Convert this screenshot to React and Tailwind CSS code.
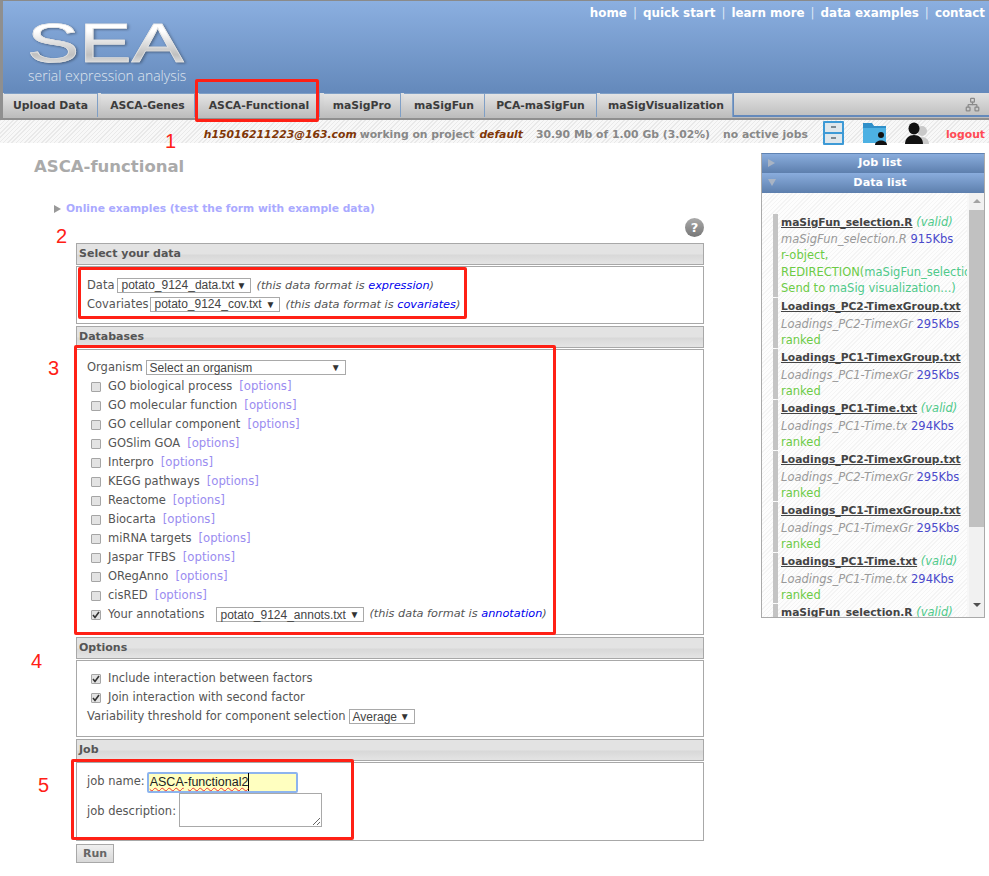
import React from 'react';
import { Network } from 'lucide-react';

const verdana = 'font-["DejaVu_Sans",sans-serif]';
const hatch = 'bg-[repeating-linear-gradient(135deg,#e9e9e9_0,#e9e9e9_1px,#f8f8f8_1px,#f8f8f8_3px)]';
const softHatch = 'bg-[repeating-linear-gradient(135deg,#f4f4f4_0,#f4f4f4_1px,#fdfdfd_1px,#fdfdfd_3px)]';

const tabs = [
  { label: 'Upload Data', className: 'w-[94px]', gap: 'mr-[3px]' },
  { label: 'ASCA-Genes', className: 'w-[94px]', gap: 'mr-[4px]' },
  { label: 'ASCA-Functional', className: 'w-[121px]', gap: 'mr-[4px]' },
  { label: 'maSigPro', className: 'w-[77px]', gap: 'mr-[3px]' },
  { label: 'maSigFun', className: 'w-[81px]', gap: '' },
  { label: 'PCA-maSigFun', className: 'w-[112px]', gap: 'mr-[3px]' },
  { label: 'maSigVisualization', className: 'w-[133px]', gap: '' },
];

const databases = [
  'GO biological process',
  'GO molecular function',
  'GO cellular component',
  'GOSlim GOA',
  'Interpro',
  'KEGG pathways',
  'Reactome',
  'Biocarta',
  'miRNA targets',
  'Jaspar TFBS',
  'ORegAnno',
  'cisRED',
];

const dataFiles = [
  { name: 'Loadings_PC2-TimexGroup.txt', short: 'Loadings_PC2-TimexGr', size: '295Kbs' },
  { name: 'Loadings_PC1-TimexGroup.txt', short: 'Loadings_PC1-TimexGr', size: '295Kbs' },
  { name: 'Loadings_PC1-Time.txt', short: 'Loadings_PC1-Time.tx', size: '294Kbs', valid: true },
  { name: 'Loadings_PC2-TimexGroup.txt', short: 'Loadings_PC2-TimexGr', size: '295Kbs' },
  { name: 'Loadings_PC1-TimexGroup.txt', short: 'Loadings_PC1-TimexGr', size: '295Kbs' },
  { name: 'Loadings_PC1-Time.txt', short: 'Loadings_PC1-Time.tx', size: '294Kbs', valid: true },
];

const Fake = ({ value, className }) => (
  <span className={`inline-flex items-center justify-between h-[15px] border border-[#a9a9a9] bg-white pl-[3px] pr-[4px] font-["Liberation_Sans",sans-serif] text-[12px] text-[#444] shrink-0 ${className}`}>
    <span>{value}</span>
    <span className="text-[10px] text-[#333]">▼</span>
  </span>
);

const Check = ({ checked }) => (
  <span className="w-[10px] h-[10px] rounded-[1px] border border-[#a5a5a5] bg-[#e3e3e3] flex items-center justify-center shrink-0">
    {checked && (
      <svg width="8" height="8" viewBox="0 0 8 8">
        <path d="M1 4 L3 6.5 L7 1" fill="none" stroke="#333" strokeWidth="1.6" />
      </svg>
    )}
  </span>
);

const SectionHead = ({ title }) => (
  <div className={`h-[22px] border border-[#a8a8a8] bg-[linear-gradient(#e3e3e3_50%,#d8d8d8_55%,#e4e4e4)] pl-[2px] flex items-center text-[11px] font-bold text-[#555] ${verdana}`}>
    {title}
  </div>
);

const Options = () => <span className="text-[11.7px] text-[#9a8cf0]">[options]</span>;

const CabinetIcon = () => (
  <svg width="23" height="25" viewBox="0 0 23 25">
    <rect x="1" y="0" width="21" height="24" rx="1" fill="#3d9ad6" />
    <rect x="3" y="2" width="17" height="9" fill="#dfe7ec" />
    <rect x="3" y="13" width="17" height="9" fill="#dfe7ec" />
    <rect x="9" y="5" width="5" height="2" fill="#7d8a92" />
    <rect x="9" y="16" width="5" height="2" fill="#7d8a92" />
  </svg>
);

const FolderIcon = () => (
  <svg width="24" height="23" viewBox="0 0 24 23">
    <path d="M0 1 H9 L11 4 H23 V21 H0 Z" fill="#2f8fc9" />
    <path d="M0 6 H23 V21 H0 Z" fill="#4db1e3" />
    <circle cx="18" cy="13" r="3" fill="#111" />
    <path d="M12 23 C12 17 24 17 24 23 Z" fill="#111" />
  </svg>
);

const PeopleIcon = () => (
  <svg width="24" height="23" viewBox="0 0 24 23">
    <circle cx="17" cy="9" r="5" fill="#c9c9c9" />
    <path d="M11 22 C11 13 24 13 24 22 Z" fill="#c9c9c9" />
    <ellipse cx="9" cy="6.5" rx="5.5" ry="6" fill="#111" />
    <path d="M0 22 C0 10 18 10 18 22 Z" fill="#111" />
  </svg>
);

const HelpIcon = () => (
  <span className={`w-[19px] h-[19px] rounded-full bg-[linear-gradient(#aaa,#777)] text-white font-bold text-[13px] leading-[19px] text-center ${verdana}`}>?</span>
);

const DataRow = ({ name, short, size, valid }) => (
  <div className="border-l-[5px] border-[#c4c4c4] mb-[1px] pl-[3px] h-[50px] leading-[16.5px] whitespace-nowrap overflow-hidden">
    <div>
      <span className="text-[10.7px] font-bold underline text-[#444]">{name}</span>
      {valid && <span className="italic text-[#4fc98a]"> (valid)</span>}
    </div>
    <div>
      <span className="italic text-[#999]">{short}</span> <span className="text-[#4a4acb]">{size}</span>
    </div>
    <div className="text-[#6ccb45]">ranked</div>
  </div>
);

// red marks that were painted over the page
const RedBox = ({ className }) => (
  <div className={`absolute border-[3px] border-[#ff2015] rounded-[2px] pointer-events-none ${className}`} />
);

const RedNumber = ({ n, className }) => (
  <span className={`absolute text-[#ff2015] text-[20px] leading-none font-["Liberation_Sans",sans-serif] ${className}`}>{n}</span>
);

const App = () => {
  return (
    <div className={`relative w-[989px] h-[876px] overflow-hidden bg-white text-[11.5px] ${verdana}`}>
      {/* Header */}
      <header className="h-[93px] border-t border-[#8a8a8a] border-l-[3px] border-l-[#8f8f8f] bg-[linear-gradient(#8bafe0,#6489bb)] flex justify-between">
        <div className="pl-[25px] pt-[14px]">
          <div className='font-["Liberation_Sans",sans-serif] text-[56px] leading-[56px] h-[53px] w-[160px] -ml-[1px] origin-left scale-x-[1.4] bg-[linear-gradient(#ffffff_30%,#c0c0c0_75%,#eeeeee)] bg-clip-text text-transparent [-webkit-text-stroke:0.6px_#e4e4e4] drop-shadow-[1px_1px_1px_rgba(0,0,0,0.35)]'>SEA</div>
          <div className='font-["Open_Sans",sans-serif] font-light text-[14px] leading-[16px] text-[#dfe5ee] whitespace-nowrap'>serial expression analysis</div>
        </div>
        <nav className="pr-[4px] pt-[4px] h-[20px] flex gap-[6px] text-white font-bold text-[11.9px] leading-[16px]">
          <span>home</span><span className="font-normal text-[#dce6f5]">|</span>
          <span>quick start</span><span className="font-normal text-[#dce6f5]">|</span>
          <span>learn more</span><span className="font-normal text-[#dce6f5]">|</span>
          <span>data examples</span><span className="font-normal text-[#dce6f5]">|</span>
          <span>contact</span>
        </nav>
      </header>

      {/* Tabs */}
      <div className="h-[25px] border-l-[3px] border-l-[#8f8f8f] bg-[#6489bb] flex">
        <div className="flex-1 flex bg-[linear-gradient(#e2e2e2,#bcbcbc)] pl-[1px]">
          {tabs.map((tab) => (
            <div key={tab.label} className={`${tab.className} ${tab.gap} h-[24px] pt-[2px] shrink-0 border-t border-r border-[#7f9fc6] bg-[linear-gradient(#e4e4e4,#bdbdbd)] flex items-center justify-center font-bold text-[10.8px] text-[#3c3c3c]`}>
              {tab.label}
            </div>
          ))}
          <div className="flex-1 h-[24px] border-l border-b-2 border-[#6489bb] flex items-center justify-end pr-[9px]">
            <Network size={15} className="text-[#8a8a8a]" />
          </div>
        </div>
      </div>

      {/* Status strip */}
      <div className={`h-[25px] border-t-2 border-[#8f8f8f] ${hatch} flex items-center justify-end pr-[4px] pt-[8px] font-bold text-[10.8px] whitespace-nowrap`}>
        <span className="italic text-[#7f3606]">h15016211223@163.com</span>
        <span className="ml-[3px] text-[#888]">working on project</span>
        <span className="ml-[5px] italic text-[#7f3606]">default</span>
        <span className="ml-[13px] text-[#888]">30.90 Mb of 1.00 Gb (3.02%)</span>
        <span className="ml-[13px] text-[#888]">no active jobs</span>
        <span className="ml-[14px] -mt-[4px]"><CabinetIcon /></span>
        <span className="ml-[18px] -mt-[4px]"><FolderIcon /></span>
        <span className="ml-[18px] -mt-[4px]"><PeopleIcon /></span>
        <span className="ml-[17px] text-[#ff4b55]">logout</span>
      </div>

      {/* Page body */}
      <div className="flex justify-between">
        <main className="w-[704px] pl-[34px]">
          <h1 className="mt-[13px] text-[16.5px] leading-[22px] font-bold text-[#aaa]">ASCA-functional</h1>
          <div className="mt-[23px] ml-[20px] flex items-center gap-[5px] h-[16px] font-bold text-[10.7px] text-[#aaaaff]">
            <span className="w-0 h-0 border-y-[4px] border-y-transparent border-l-[7px] border-l-[#999]" />
            <span>Online examples (test the form with example data)</span>
          </div>
          <div className="flex justify-end mt-[1px] h-[25px]"><HelpIcon /></div>

          <form className="ml-[42px] text-[#555]">
            <SectionHead title="Select your data" />
            <div className="mt-[1px] h-[58px] border border-[#a8a8a8] pl-[10px] pt-[9px] leading-[19px]">
              <div className="flex items-center h-[19px] gap-[3px]">
                <span>Data</span>
                <Fake value="potato_9124_data.txt" className="w-[134px]" />
                <span className="ml-[2px] italic text-[11.3px]">(this data format is <span className="text-[#0000ee]">expression</span>)</span>
              </div>
              <div className="flex items-center h-[19px] gap-[2px]">
                <span>Covariates</span>
                <Fake value="potato_9124_cov.txt" className="w-[130px]" />
                <span className="ml-[3px] italic text-[11.3px]">(this data format is <span className="text-[#0000ee]">covariates</span>)</span>
              </div>
            </div>

            <div className="mt-[2px]"><SectionHead title="Databases" /></div>
            <div className="mt-[1px] h-[286px] border border-[#a8a8a8] pl-[10px] pt-[8px]">
              <div className="flex items-center h-[19px] gap-[3px]">
                <span>Organism</span>
                <Fake value="Select an organism" className="w-[200px]" />
              </div>
              {databases.map((db) => (
                <div key={db} className="flex items-center h-[19px] pl-[4px]">
                  <Check />
                  <span className="ml-[7px]">{db}</span>
                  <span className="ml-[7px]"><Options /></span>
                </div>
              ))}
              <div className="flex items-center h-[19px] pl-[4px]">
                <Check checked />
                <span className="ml-[7px]">Your annotations</span>
                <Fake value="potato_9124_annots.txt" className="ml-[12px] w-[148px]" />
                <span className="ml-[5px] italic text-[11.3px]">(this data format is <span className="text-[#0000ee]">annotation</span>)</span>
              </div>
            </div>

            <div className="mt-[2px]"><SectionHead title="Options" /></div>
            <div className="mt-[1px] h-[77px] border border-[#a8a8a8] pl-[10px] pt-[8px]">
              <div className="flex items-center h-[19px] pl-[4px]">
                <Check checked />
                <span className="ml-[7px]">Include interaction between factors</span>
              </div>
              <div className="flex items-center h-[19px] pl-[4px]">
                <Check checked />
                <span className="ml-[7px]">Join interaction with second factor</span>
              </div>
              <div className="flex items-center h-[19px] gap-[3px]">
                <span>Variability threshold for component selection</span>
                <Fake value="Average" className="w-[66px]" />
              </div>
            </div>

            <div className="mt-[2px]"><SectionHead title="Job" /></div>
            <div className="mt-[1px] h-[79px] border border-[#a8a8a8] pl-[10px] pt-[8px]">
              <div className="flex items-center h-[22px] gap-[2px]">
                <span>job name:</span>
                <div className='w-[151px] h-[21px] flex items-center bg-[#ffffc0] border-2 border-[#8db4ee] rounded-[2px] pl-[1px] font-["Liberation_Sans",sans-serif] text-[12.5px] text-[#222]'>
                  <span className="underline decoration-wavy decoration-[#e33] decoration-1">ASCA</span>
                  <span>-</span>
                  <span className="underline decoration-wavy decoration-[#e33] decoration-1 border-r border-black">functional2</span>
                </div>
              </div>
              <div className="flex items-center h-[34px] gap-[3px]">
                <span className="pt-[3px]">job description:</span>
                <textarea readOnly className="w-[143px] h-[34px] border border-[#a9a9a9] bg-white outline-none" />
              </div>
            </div>

            <button type="button" className="mt-[3px] w-[38px] h-[19px] border border-[#a8a8a8] bg-[linear-gradient(#f0f0f0,#d8d8d8)] text-[11px] font-bold text-[#666] leading-none">Run</button>
          </form>
        </main>

        {/* Side panel */}
        <aside className="w-[224px] h-[465px] mt-[10px] mr-[4px] border border-[#aaa] border-t-[#5f83b3] flex flex-col">
          <div className="h-[19px] pl-[14px] bg-[linear-gradient(#8aaddd,#5d7fad)] flex items-center text-white text-[11.2px] font-bold relative justify-center">
            <span className="absolute left-[6px] top-[5px] w-0 h-0 border-y-[4px] border-y-transparent border-l-[7px] border-l-[#a9b4c4]" />
            Job list
          </div>
          <div className="h-[20px] pl-[14px] bg-[linear-gradient(#8aaddd,#5d7fad)] flex items-center text-white text-[11.2px] font-bold relative justify-center">
            <span className="absolute left-[6px] top-[6px] w-0 h-0 border-x-[4px] border-x-transparent border-t-[7px] border-t-[#a9b4c4]" />
            Data list
          </div>
          <div className="flex-1 min-h-0 flex">
            <div className={`w-[205px] shrink-0 overflow-hidden ${softHatch} pt-[21px] pl-[11px]`}>
              <div className="border-l-[5px] border-[#c4c4c4] mb-[1px] pl-[3px] h-[83px] leading-[16.2px] whitespace-nowrap overflow-hidden">
                <div>
                  <span className="text-[10.7px] font-bold underline text-[#444]">maSigFun_selection.R</span>
                  <span className="italic text-[#4fc98a]"> (valid)</span>
                </div>
                <div>
                  <span className="italic text-[#999]">maSigFun_selection.R</span> <span className="text-[#4a4acb]">915Kbs</span>
                </div>
                <div className="text-[#6ccb45]">r-object,</div>
                <div className="text-[#6ccb45]">REDIRECTION(<span className="text-[#4fc98a]">maSigFun_selection</span></div>
                <div className="text-[#4fc98a]"><span className="text-[#6ccb45]">Send to</span> maSig visualization...)</div>
              </div>
              {dataFiles.map((file, i) => (
                <DataRow key={i} {...file} />
              ))}
              <div className="border-l-[5px] border-[#c4c4c4] pl-[3px] leading-[16px] whitespace-nowrap">
                <span className="text-[10.7px] font-bold underline text-[#444]">maSigFun_selection.R</span>
                <span className="italic text-[#4fc98a]"> (valid)</span>
              </div>
            </div>
            <div className="flex-1 bg-[#f7f7f7]" />
            {/* scrollbar */}
            <div className="w-[15px] bg-[#f1f1f1] flex flex-col items-center">
              <span className="h-[17px] pt-[6px]"><span className="block w-0 h-0 border-x-[4px] border-x-transparent border-b-[4px] border-b-[#a3a3a3]" /></span>
              <div className="w-full h-[317px] bg-[#c1c1c1]" />
              <div className="flex-1" />
              <span className="h-[14px]"><span className="block w-0 h-0 border-x-[4px] border-x-transparent border-t-[4px] border-t-[#505050]" /></span>
            </div>
          </div>
        </aside>
      </div>

      {/* Red annotations */}
      <RedBox className="left-[195px] top-[79px] w-[124px] h-[43px]" />
      <RedBox className="left-[78px] top-[267px] w-[389px] h-[52px]" />
      <RedBox className="left-[74px] top-[345px] w-[482px] h-[290px]" />
      <RedBox className="left-[71px] top-[759px] w-[283px] h-[81px]" />
      <RedNumber n="1" className="left-[165px] top-[131px]" />
      <RedNumber n="2" className="left-[56px] top-[226px]" />
      <RedNumber n="3" className="left-[48px] top-[358px]" />
      <RedNumber n="4" className="left-[31px] top-[651px]" />
      <RedNumber n="5" className="left-[38px] top-[775px]" />
    </div>
  );
};

export default App;
